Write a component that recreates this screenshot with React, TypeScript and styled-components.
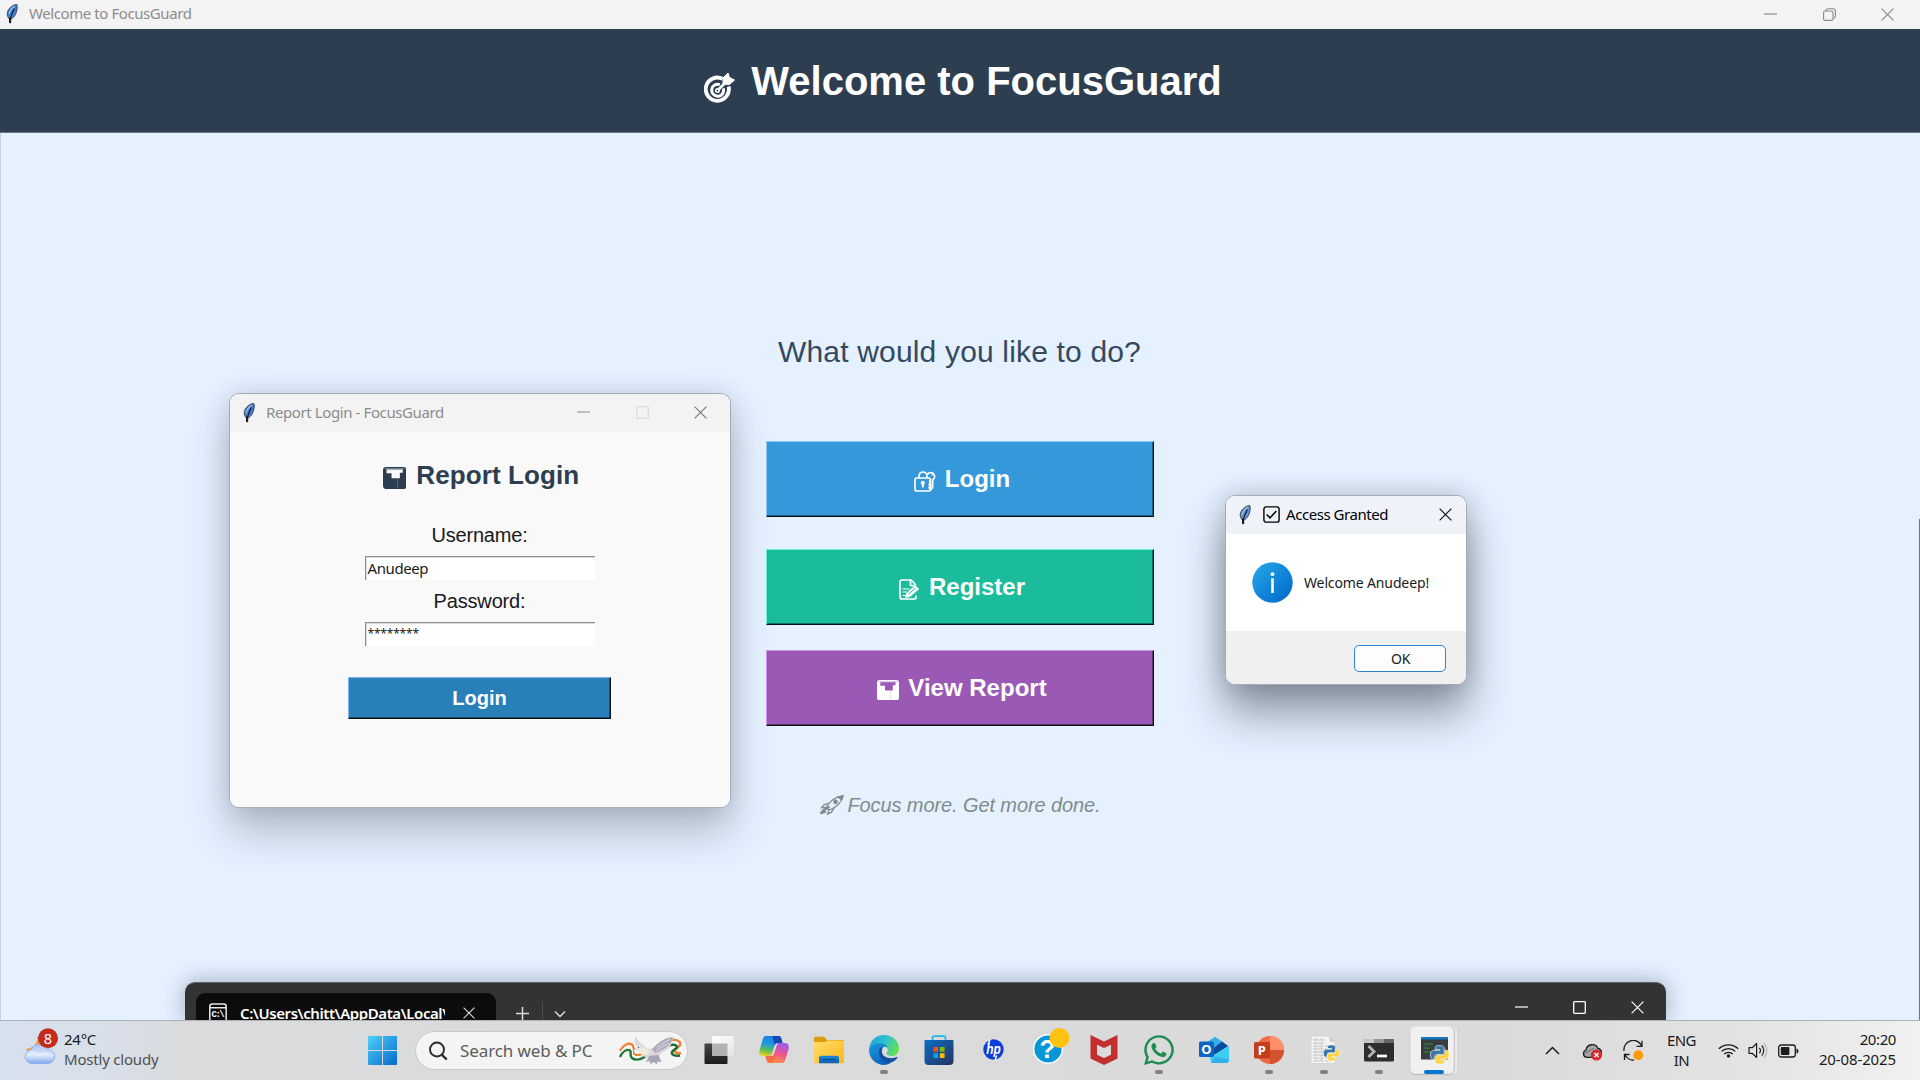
import React from "react";
import styled, { createGlobalStyle, css } from "styled-components";
import { FaWhatsapp } from "react-icons/fa";

const ARIAL = `"Liberation Sans", Arial, sans-serif`;
const SEGOE = `"Segoe UI", "Noto Sans", "Open Sans", sans-serif`;

const GlobalStyle = createGlobalStyle`
  * { box-sizing: border-box; }
  html, body { margin: 0; padding: 0; }
  body { width: 1920px; height: 1080px; overflow: hidden; background: #e5f1ff; }
  svg { display: block; flex: none; }
`;

const Desktop = styled.div`
  position: relative;
  width: 1920px;
  height: 1080px;
  overflow: hidden;
  display: flex;
  flex-direction: column;
  font-family: ${SEGOE};
`;

/* ---------- text ---------- */

type TextProps = { $size: number; $spacing?: number; $color?: string; $weight?: number };

const Text = styled.span<TextProps>`
  display: block;
  font-family: ${SEGOE};
  font-size: ${(p) => p.$size}px;
  letter-spacing: ${(p) => p.$spacing ?? 0}px;
  color: ${(p) => p.$color ?? "#1a1a1a"};
  font-weight: ${(p) => p.$weight ?? 400};
  line-height: 18px;
  padding-bottom: 2px;
  white-space: nowrap;
`;

const TkText = styled(Text)`
  font-family: ${ARIAL};
  line-height: 20px;
  padding-bottom: 0;
`;

/* ---------- main window ---------- */

const MainWindow = styled.main`
  width: 1920px;
  height: 1020px;
  display: flex;
  flex-direction: column;
  background: #e5f1ff;
`;

const MainTitleBar = styled.div`
  height: 29px;
  flex: none;
  display: flex;
  align-items: center;
  padding: 0 0 1px 6px;
  background: #f3f3f3;
`;

const MainTitle = styled.div`
  flex: 1;
  display: flex;
  align-items: center;
  gap: 11px;
`;

const Header = styled.header`
  height: 104px;
  flex: none;
  display: flex;
  align-items: center;
  justify-content: center;
  gap: 16px;
  padding-left: 6px;
  background: #2d3e50;
  border-bottom: 1px solid #68798b;
`;

const Shift = styled.div<{ $y: number }>`
  display: flex;
  margin-top: ${(p) => p.$y * 2}px;
`;

const Content = styled.section`
  flex: 1;
  display: flex;
  flex-direction: column;
  align-items: center;
  padding: 198px 2px 0 0;
  border-left: 1px solid #c5d0dd;
  background: linear-gradient(#6b7580, #6b7580) right bottom / 1px 501px no-repeat;
`;

const Question = styled(TkText)`
  line-height: 40px;
  padding-top: 1px;
  margin-bottom: 69px;
`;

const raised = css<{ $light: string; $dark: string }>`
  border: 1px solid;
  border-color: ${(p) => p.$light} #0b0f14 #0b0f14 ${(p) => p.$light};
  box-shadow: inset -1px -1px 0 ${(p) => p.$dark};
`;

const ActionButton = styled.button<{ $bg: string; $light: string; $dark: string; $gap: number }>`
  ${raised}
  width: 388px;
  height: 76px;
  flex: none;
  margin: 0 0 ${(p) => p.$gap}px;
  padding: 0 0 0 5px;
  display: flex;
  align-items: center;
  justify-content: center;
  gap: 9px;
  border-radius: 0;
  background: ${(p) => p.$bg};
`;

const Tagline = styled.div`
  display: flex;
  align-items: center;
  gap: 3px;
  height: 24px;
  padding-left: 1px;
  font-style: italic;
`;

/* ---------- floating windows ---------- */

const FloatingWindow = styled.section<{ $x: number; $y: number; $w: number; $h: number; $shadow: string }>`
  position: absolute;
  left: ${(p) => p.$x}px;
  top: ${(p) => p.$y}px;
  width: ${(p) => p.$w}px;
  height: ${(p) => p.$h}px;
  display: flex;
  flex-direction: column;
  overflow: hidden;
  border: 1px solid #a3abb5;
  border-radius: 10px;
  box-shadow: ${(p) => p.$shadow};
`;

const WindowBar = styled.div<{ $bg: string; $right: number }>`
  height: 38px;
  flex: none;
  display: flex;
  align-items: center;
  padding: 0 ${(p) => p.$right}px 1px 13px;
  background: ${(p) => p.$bg};
`;

const WindowTitle = styled.div<{ $gap: number }>`
  flex: 1;
  display: flex;
  align-items: center;
  gap: ${(p) => p.$gap}px;
`;

const Controls = styled.div<{ $gap: number; $right?: number }>`
  display: flex;
  align-items: center;
  gap: ${(p) => p.$gap}px;
  padding-right: ${(p) => p.$right ?? 0}px;
`;

const ReportBody = styled.div`
  flex: 1;
  display: flex;
  flex-direction: column;
  align-items: center;
  padding: 25px 1px 0 0;
  background: #f9f9f9;
`;

const ReportHeading = styled.div`
  height: 36px;
  display: flex;
  align-items: center;
  gap: 10px;
  padding-left: 3px;
  margin-bottom: 30px;
`;

const FieldLabel = styled(TkText)`
  line-height: 24px;
`;

const Entry = styled.div`
  width: 230px;
  height: 24px;
  margin: 9px 0 9px;
  display: flex;
  align-items: center;
  border-top: 1px solid #8f8f8f;
  border-left: 1px solid #8f8f8f;
  box-shadow: inset 1px 1px 0 #d9d9d9;
  padding-left: 2px;
  background: #fff;
`;

const SubmitButton = styled.button<{ $light: string; $dark: string }>`
  ${raised}
  width: 263px;
  height: 42px;
  margin: 22px 0 0;
  padding: 0;
  display: flex;
  align-items: center;
  justify-content: center;
  background: #2980b9;
`;

const DialogBody = styled.div`
  height: 97px;
  flex: none;
  display: flex;
  align-items: center;
  gap: 11px;
  padding: 0 0 1px 26px;
  background: #fff;
`;

const DialogFooter = styled.div`
  flex: 1;
  display: flex;
  justify-content: flex-end;
  align-items: flex-start;
  padding: 14px 20px 0 0;
  background: #f0f0f0;
`;

const OkButton = styled.button`
  width: 92px;
  height: 27px;
  display: flex;
  align-items: center;
  justify-content: center;
  padding: 2px 0 0 1px;
  border: 1.5px solid #2f86d1;
  border-radius: 5px;
  background: #fdfdfd;
`;

/* ---------- terminal ---------- */

const Terminal = styled.section`
  position: absolute;
  left: 185px;
  top: 982px;
  width: 1481px;
  height: 38px;
  display: flex;
  align-items: flex-end;
  padding-left: 11px;
  border-top: 1px solid #5c6168;
  border-radius: 10px 10px 0 0;
  background: #333;
  box-shadow: 0 0 22px rgba(40, 50, 65, 0.38);
  clip-path: inset(-40px -40px 0 -40px);
`;

const TerminalTab = styled.div`
  width: 300px;
  height: 27px;
  display: flex;
  align-items: flex-start;
  padding: 10px 20px 0 13px;
  border-radius: 9px 9px 0 0;
  background: #0c0c0c;
  overflow: hidden;
`;

const TabLabel = styled.div`
  width: 205px;
  height: 20px;
  margin: 1px 18px 0 13px;
  overflow: hidden;
  display: flex;
`;

const TabActions = styled.div`
  flex: 1;
  height: 27px;
  display: flex;
  align-items: center;
  padding: 14px 0 0 20px;
`;

const TabDivider = styled.div`
  width: 1px;
  height: 22px;
  margin: -2px 11px 0 13px;
  background: #4a4a4a;
`;

const CaptionButtons = styled(Controls)`
  align-self: flex-start;
  height: 49px;
`;

/* ---------- taskbar ---------- */

const Taskbar = styled.footer`
  height: 60px;
  flex: none;
  display: flex;
  align-items: center;
  border-top: 1px solid #aeb0b3;
  background: linear-gradient(90deg, #d7e0ee 0, #d8dfe9 110px, #dadbdc 190px, #dadada 1500px, #e3e3e3 1750px, #f1f1f1 1920px);
`;

const Weather = styled.div`
  width: 343px;
  display: flex;
  align-items: center;
  gap: 6px;
  padding: 0 0 7px 23px;
`;

const Stack = styled.div<{ $align: string; $drop?: number }>`
  display: flex;
  flex-direction: column;
  align-items: ${(p) => p.$align};
  padding-top: ${(p) => p.$drop ?? 0}px;
`;

const StartButton = styled.div`
  width: 72px;
  padding-left: 25px;
`;

const SearchBox = styled.div`
  width: 273px;
  height: 39px;
  display: flex;
  align-items: center;
  padding: 0 4px 0 13px;
  border: 1px solid #c9c9c9;
  border-radius: 20px;
  background: #f4f4f4;
`;

const SearchText = styled.div`
  flex: 1;
  padding: 2px 0 0 12px;
  display: flex;
`;

const Apps = styled.div`
  display: flex;
  height: 59px;
  margin-left: 3px;
`;

const AppSlot = styled.div`
  width: 55px;
  height: 59px;
  display: flex;
  flex-direction: column;
  align-items: center;
  padding-top: 13px;
`;

const Indicator = styled.div<{ $active?: boolean }>`
  width: ${(p) => (p.$active ? 20 : 8)}px;
  height: 4px;
  flex: none;
  margin-top: 4px;
  border-radius: 2px;
  background: ${(p) => (p.$active ? "#0078d4" : "#808080")};
`;

const ActiveTile = styled.div`
  width: 44px;
  height: 48px;
  margin: -8px 3px 0 0;
  padding: 7px 0 0 3px;
  display: flex;
  flex-direction: column;
  align-items: center;
  border: 1px solid #e4e4e4;
  border-radius: 5px;
  background: #f0f0f0;
  box-shadow: 1px 0 0 #c9c9c9, 4px 0 0 -0.5px #e9e9e9, 5px 0 0 -0.5px #cfcfcf, 0 1px 1px #bbb;
`;

const Tray = styled.div`
  flex: 1;
  height: 59px;
  display: flex;
  align-items: center;
  padding: 0 24px 0 84px;
`;

const TrayItem = styled.div<{ $ml: number; $mt?: number }>`
  display: flex;
  margin-left: ${(p) => p.$ml}px;
  margin-top: ${(p) => p.$mt ?? 0}px;
`;

const Clock = styled.div`
  flex: 1;
  display: flex;
  flex-direction: column;
  align-items: flex-end;
  padding-bottom: 2px;
`;

/* ---------- small glyphs ---------- */

const Feather = ({ tone = "#3f7fd0" }: { tone?: string }) => (
  <svg width="12" height="20" viewBox="0 0 12 20">
    <path d="M10.8.4c.8 2 .6 5.600-1 9.200-.9 2.400-2.700 4.600-4.900 5.400L4.600 19l-1-.3.100-3.500C1 12.800.6 9.600 2 6.600 3.700 3.200 7.400.600 10.800.4z" fill={tone} stroke="#3a4048" strokeWidth=".9" />
    <path d="M8.300 4.500C7 7 5 11 4.200 15.500" stroke="#0b1018" strokeWidth="1.100" fill="none" />
    <path d="M8.600 2.200C6 4 3.600 7 3.200 10" stroke="#9cc4f2" strokeWidth="1.100" fill="none" />
    <path d="M3.700 13.500l.4 5.500" stroke="#111" strokeWidth="1.600" />
  </svg>
);

const Minimize = ({ c }: { c: string }) => (
  <svg width="13" height="13" viewBox="0 0 13 13"><path d="M0 6h13" stroke={c} strokeWidth="1.200" /></svg>
);
const Maximize = ({ c }: { c: string }) => (
  <svg width="13" height="13" viewBox="0 0 13 13"><rect x=".7" y=".7" width="11.600" height="11.600" rx=".8" fill="none" stroke={c} strokeWidth="1.300" /></svg>
);
const Restore = ({ c }: { c: string }) => (
  <svg width="13" height="13" viewBox="0 0 13 13" fill="none" stroke={c} strokeWidth="1.100">
    <rect x=".6" y="3" width="9.400" height="9.400" rx="1.500" />
    <path d="M3 3V2.400Q3.200.7 5 .7h5q2.400 0 2.400 2.400v5q0 1.700-1.600 2h-.7" />
  </svg>
);
const Close = ({ c, s = 13 }: { c: string; s?: number }) => (
  <svg width={s} height={s} viewBox="0 0 13 13"><path d="M.6.6l11.800 11.800M12.400.6L.6 12.400" stroke={c} strokeWidth="1.200" /></svg>
);

const Target = () => (
  <svg width="31" height="32" viewBox="0 0 31 32" fill="none" stroke="#fff">
    <path d="M18.500 6.800A11.600 11.600 0 1 0 24.600 14.500" strokeWidth="3.800" />
    <path d="M15.800 12.600a6 6 0 1 0 3.600 3.800" strokeWidth="3" />
    <circle cx="13.500" cy="18.500" r="1.700" strokeWidth="1.600" />
    <path d="M14 18L24 8" strokeWidth="2.800" />
    <path d="M19 12V6L24 1l1.500 4.500L30.500 8 25.500 12.500z" fill="#fff" strokeWidth="1" />
  </svg>
);

const LockKey = () => (
  <svg width="22" height="21" viewBox="0 0 22 21" fill="none" stroke="#fff" strokeWidth="1.700">
    <rect x="1" y="7" width="15.500" height="13" rx="2" />
    <path d="M5 7V5a4 4 0 0 1 8 0v2" />
    <circle cx="8.800" cy="11.800" r="2.100" fill="#fff" stroke="none" />
    <path d="M8.800 12v4.500" strokeWidth="2" />
    <path d="M13.500 3.300a3.900 3.900 0 1 1 5.300 5.500l-.3 8-1.800 2-1.600-2 1.200-1.600-1.200-1.500 1-1.200-.4-3.500" />
    <path d="M17.600 3.800h.9" />
  </svg>
);

const Memo = () => (
  <svg width="21" height="21" viewBox="0 0 21 21" fill="none" stroke="#fff" strokeWidth="1.700">
    <path d="M17 16.500V18q0 2-2 2H3q-2 0-2-2V3q0-2 2-2h9l5 5" />
    <path d="M11.500 1v5.500H17" />
    <path d="M3.500 10h7M3.500 13h4.500M3.500 16.500h3" strokeWidth="1.100" />
    <path d="M7.500 14.500L16 6.500l3.800 3.500L11 17.500l-4.500 1z" fill="#fff" strokeWidth=".8" />
    <path d="M9.500 15L16 9.500" stroke="#1cba9b" strokeWidth="1" />
  </svg>
);

const ChartTile = ({ size, fg, bg }: { size: number; fg: string; bg: string }) => (
  <svg width={size} height={size * 0.94} viewBox="0 0 22 20.600">
    <rect x="0" y="0" width="22" height="20.600" rx="2.800" fill={fg} />
    <path d="M2 .8h18v1.600H2z" fill={bg} opacity=".35" />
    <path d="M3.300 2.300h15.200v3h-2.700v5.200H8V5.800H3.300z" fill={bg} />
    <path d="M13.600 11v8" stroke={bg} strokeOpacity=".25" strokeWidth=".8" />
  </svg>
);

const Rocket = () => (
  <svg width="25" height="20" viewBox="0 0 25 20" fill="none" stroke="#7f8c8d" strokeWidth="1.300">
    <path d="M7.500 12.500C10 6.500 16 1.500 24 1c-1 6-6.500 11.500-13.500 14z" />
    <path d="M19 1.800l3.500 3L24 1z" fill="#7f8c8d" />
    <circle cx="16.500" cy="6.800" r="1.700" fill="#7f8c8d" />
    <path d="M9.500 8.300L5 9.800l-2.500 3 5-.5M15 13.200l-2.500 4-4 2 1.500-4" />
    <path d="M10.500 11.500L6 15" strokeWidth="2.200" />
    <path d="M6.500 13l-5 5.500L7 16.500M6 14.500l-2 .5" strokeWidth="2" />
  </svg>
);

const CheckGlyph = () => (
  <svg width="17" height="17" viewBox="0 0 17 17" fill="none" stroke="#000">
    <rect x=".9" y=".9" width="15.200" height="15.200" rx="2.200" strokeWidth="1.400" />
    <path d="M3.600 8.500l3.400 3.400L13.300 5" strokeWidth="1.500" />
  </svg>
);

const InfoIcon = () => (
  <svg width="41" height="41" viewBox="0 0 41 41">
    <defs>
      <linearGradient id="info" x1="0" y1="0" x2="1" y2="1">
        <stop offset="0" stopColor="#25a8ea" />
        <stop offset="1" stopColor="#0067c8" />
      </linearGradient>
    </defs>
    <circle cx="20.500" cy="20.500" r="20.200" fill="url(#info)" />
    <circle cx="20.500" cy="12.200" r="1.900" fill="#fff" />
    <path d="M20.500 16.300V31" stroke="#fff" strokeWidth="2.600" />
  </svg>
);

const ConsoleGlyph = () => (
  <svg width="18" height="18" viewBox="0 0 18 18">
    <rect x=".8" y="1" width="16.400" height="20" rx="2.500" fill="none" stroke="#e8e8e8" strokeWidth="1.500" />
    <path d="M1 4.800h16" stroke="#e8e8e8" strokeWidth="1.500" />
    <text x="2.600" y="14.200" fontFamily="Liberation Mono" fontSize="9" fontWeight="700" fill="#fff" textLength="13">C:\</text>
  </svg>
);

/* ---------- taskbar icons ---------- */

const WeatherIcon = () => (
  <svg width="35" height="38" viewBox="0 0 35 38">
    <defs>
      <linearGradient id="cloud" x1="0" y1="0" x2="0" y2="1">
        <stop offset="0" stopColor="#a9c4f5" /><stop offset=".6" stopColor="#dbe7fd" /><stop offset="1" stopColor="#7da6ee" />
      </linearGradient>
      <linearGradient id="moon" x1="0" y1="0" x2="0" y2="1">
        <stop offset="0" stopColor="#f5b63a" /><stop offset="1" stopColor="#f08a1d" />
      </linearGradient>
    </defs>
    <path d="M14 8c1.500 6-3 12.500-11 12.800C5 26 15 27 20 23L24 10z" fill="url(#moon)" />
    <path d="M9 35.500a7 7 0 0 1-1-13.900A8.800 8.800 0 0 1 24 21a7.300 7.300 0 0 1 1.500 14.500z" fill="url(#cloud)" stroke="#84a8ea" strokeWidth=".8" />
    <path d="M5 27c3-3 8-3 11 0 3-2 8-2 11 0" stroke="#f0f5ff" strokeWidth="2" fill="none" opacity=".7" />
    <circle cx="25" cy="10.300" r="10" fill="#c42b1c" />
    <text x="25" y="15.500" textAnchor="middle" fontFamily="Noto Sans" fontSize="14.500" fill="#fff">8</text>
  </svg>
);

const StartIcon = () => (
  <svg width="29" height="29" viewBox="0 0 29 29">
    <defs>
      <linearGradient id="win" x1="0" y1="0" x2="29" y2="29" gradientUnits="userSpaceOnUse">
        <stop offset="0" stopColor="#4fd0fb" /><stop offset="1" stopColor="#0669cc" />
      </linearGradient>
    </defs>
    <path d="M1 0h13v14H0V1q0-1 1-1zM15 0h13q1 0 1 1v13H15zM0 15h14v14H1q-1 0-1-1zM15 15h14v13q0 1-1 1H15z" fill="url(#win)" />
  </svg>
);

const SearchIcon = () => (
  <svg width="19" height="20" viewBox="0 0 19 20" fill="none" stroke="#2b2b2b">
    <circle cx="8" cy="8.500" r="7" strokeWidth="1.900" /><path d="M13 13.800l4.800 4.700" strokeWidth="2.400" />
  </svg>
);

const Dove = () => (
  <svg width="64" height="32" viewBox="0 0 64 32">
    <g fill="none" strokeWidth="2.400">
      <path d="M1 16C4 10 9 7.500 13 9.500c3 2-1 6 2 9.500 3 2.500 7 1 11-1" stroke="#f08236" />
      <path d="M2 18.500C5 13 9 11 12 12.500c2 2-1 6 2 8.500s8 1.500 12-1" stroke="#fbfbfb" />
      <path d="M1 22c3-6 7-8 10-6.500 2 1.500-1 5 2 7.500s8 2 14-2" stroke="#1d7a35" />
      <path d="M50 6c4-2 9-1.500 11 1.500s-3 5-5 7 2 4.500 6 3.500" stroke="#f08236" />
      <path d="M49 11c4-2 8-1.500 9 .5s-4 3-5 5.500 3 4.500 8 3.500" stroke="#1d6b30" />
    </g>
    <path d="M17 1c1 4 4 7 8 10 3 3 6 3.500 9 2 6-6 12-10.500 20-11 0 8-5 13-12 16.500-2 3-5 5-9 5-7 0-10-3-13-8l-4-1 3-2C15 8 15 4 17 1z" fill="#dbd7dc" />
    <path d="M33 14c6-6 12-11.500 21-12-1 7-8 13-18 16z" fill="#b0acbd" />
    <path d="M38 12.500L51 4M37 15.500L50 8" stroke="#dcd8e4" strokeWidth="1" />
    <path d="M18 12c5-1 10 1 13 5-2 4-9 4-12-1z" fill="#efe9dd" />
    <path d="M30 21l-3 6 4-1 0 3.500 3.500-2.500 3.500 2.500.5-3 4 .5-3-7z" fill="#a9a4b2" />
    <path d="M16 12.500l-2.500 1 3 1.200z" fill="#c88d54" /><circle cx="19.500" cy="12.600" r=".7" fill="#333" />
  </svg>
);

const Icon = ({ children }: { children: React.ReactNode }) => (
  <svg width="32" height="32" viewBox="0 0 32 32">{children}</svg>
);

const TaskView = () => (
  <Icon>
    <defs>
      <linearGradient id="tv" x1="0" y1="0" x2="0" y2="1"><stop offset="0" stopColor="#454545" /><stop offset="1" stopColor="#1c1c1c" /></linearGradient>
      <linearGradient id="tw" x1="0" y1="0" x2="1" y2="1"><stop offset="0" stopColor="#fff" /><stop offset="1" stopColor="#e3e3e3" /></linearGradient>
    </defs>
    <rect x="1.500" y="9.500" width="23" height="20.500" rx="1" fill="url(#tv)" />
    <rect x="9" y="2" width="22" height="20" rx="1" fill="url(#tw)" />
    <rect x="9" y="9.500" width="15.500" height="12.500" fill="#b2b2b2" />
  </Icon>
);

const Copilot = () => (
  <Icon>
    <defs>
      <linearGradient id="cpa" x1=".5" y1="0" x2=".3" y2="1"><stop offset="0" stopColor="#1f7fe8" /><stop offset=".4" stopColor="#1a9be0" /><stop offset=".7" stopColor="#57b95c" /><stop offset="1" stopColor="#e8d01c" /></linearGradient>
      <linearGradient id="cpb" x1=".6" y1="0" x2=".3" y2="1"><stop offset="0" stopColor="#a05be8" /><stop offset=".5" stopColor="#f0538c" /><stop offset="1" stopColor="#ff9a3c" /></linearGradient>
    </defs>
    <path d="M8 2h12.500c2 0 2.600 1.500 3.200 4L24.500 9H20c-2 0-3 1-3.800 3.500L14 19c-.8 2-1.500 3-4 3H5c-3.500 0-4.300-3-3.300-6.500L4.500 6C5.300 3.500 6 2 8 2z" fill="url(#cpa)" />
    <path d="M14.500 2h6c2 0 2.600 1.500 3.200 4L24.500 9H20c-2 0-3 .8-3.500 2z" fill="#1746b8" />
    <path d="M24 29H12c-2 0-3-1-3.600-3.500L7.500 22H11c2.500 0 3.300-1.500 4-3.500l2.500-7C18.300 9.500 19.300 9 21 9h6c3.500 0 4.500 3 3.500 6.500L27.500 25c-.8 2.600-1.500 4-3.500 4z" fill="url(#cpb)" />
    <path d="M12 29c-2 0-3-1-3.600-3.500L7.500 22H11c2.500 0 3.300-1.500 4-3.500L16 16l1 8c-.5 3-2 5-5 5z" fill="#f0643c" opacity=".75" />
    <path d="M17.500 11.500c.6-1.600 1.500-2.300 3-2.500-1.200 1-1.700 2-2.300 4L16 19.500c-.7 2-1.500 2.500-4.500 2.500 2 0 3-1.500 3.500-3.500z" fill="#efe9f2" />
  </Icon>
);

const Explorer = () => (
  <Icon>
    <defs>
      <linearGradient id="fo" x1="0" y1="0" x2="1" y2="1"><stop offset="0" stopColor="#ffdd6e" /><stop offset="1" stopColor="#fdb913" /></linearGradient>
      <linearGradient id="fb" x1="0" y1="0" x2="0" y2="1"><stop offset="0" stopColor="#1e88dc" /><stop offset="1" stopColor="#0b62b8" /></linearGradient>
    </defs>
    <path d="M1 4q0-1.200 1.200-1.200h9L14 6h17v8H1z" fill="#dd9b10" />
    <path d="M1 8h11l2.500-1.500H31V28q0 1.200-1.200 1.200H2.200Q1 29.200 1 28z" fill="url(#fo)" />
    <path d="M6 29.200V24q0-2.300 2.300-2.300h15.400Q26 21.700 26 24v5.200z" fill="url(#fb)" />
    <path d="M9.500 25.500h13" stroke="#0a4b90" strokeWidth="1.200" />
  </Icon>
);

const Edge = () => (
  <Icon>
    <defs>
      <linearGradient id="ea" x1="0" y1=".2" x2="1" y2=".6"><stop offset="0" stopColor="#1f9fd8" /><stop offset=".5" stopColor="#2fc3d0" /><stop offset="1" stopColor="#64e04c" /></linearGradient>
      <linearGradient id="eb" x1="0" y1="0" x2=".6" y2="1"><stop offset="0" stopColor="#1b9be0" /><stop offset="1" stopColor="#0c62b8" /></linearGradient>
    </defs>
    <path d="M1.300 13C3 5.500 9 1 16 1c8.500 0 15 6 15 13.500 0 5-3.500 7.500-7.500 7.500-3 0-5-1.200-5-2.500 0-1 1.200-1.500 1.200-3.500 0-3-3-5.600-7.500-5.600C6.500 10.400 3 13 1.300 17z" fill="url(#ea)" />
    <path d="M1 16C2.500 11.500 7 8.500 12.500 9c3.500.3 6 2 7 4.500-2.500-1.700-6.500-.5-6.500 4.500 0 6 5 10 10.500 10C21 30.200 18.500 31 16 31 8 31 1 24.500 1 16z" fill="url(#eb)" />
    <path d="M12 14c-3 7 1.500 14 9 14.500 3.500 0 6.500-1.800 8.500-4.700.4-.7-.2-1-.8-.7-5 2.300-14.500 1.200-14.800-5.600 0-1.500.3-3 1.300-4.300-1.200 0-2.500.2-3.200.8z" fill="#1151a0" />
  </Icon>
);

const Store = () => (
  <Icon>
    <defs>
      <linearGradient id="st" x1="0" y1="0" x2="1" y2="1"><stop offset="0" stopColor="#0c6cc4" /><stop offset="1" stopColor="#23345f" /></linearGradient>
    </defs>
    <path d="M9.500 8V4q0-1.800 1.800-1.800h9.400q1.800 0 1.800 1.800v4" fill="none" stroke="#1fb6f2" strokeWidth="1.700" />
    <path d="M1.500 7q0-1 1-1h27q1 0 1 1v20q0 4-4 4h-21q-4 0-4-4z" fill="url(#st)" />
    <path d="M10.500 13H15v4.800h-4.500z" fill="#f25022" /><path d="M16.800 13h4.800v4.800h-4.800z" fill="#7fba00" />
    <path d="M10.500 19.200H15V24h-4.500z" fill="#00a4ef" /><path d="M16.800 19.200h4.800V24h-4.800z" fill="#ffb900" />
  </Icon>
);

const Hp = () => (
  <Icon>
    <circle cx="15.500" cy="15.500" r="10.200" fill="#0b3fd8" />
    <text x="15.400" y="20" textAnchor="middle" fontFamily="Liberation Sans" fontStyle="italic" fontWeight="700" fontSize="15" fill="#fff" textLength="14.500" lengthAdjust="spacingAndGlyphs">hp</text>
    <path d="M10 10.500l2-5M17 26.500l1.700-5" stroke="#fff" strokeWidth="1.500" />
  </Icon>
);

const HelpIcon = styled.svg`
  margin: -7px 0 0 7px;
`;

const Help = () => (
  <HelpIcon width="40" height="38" viewBox="0 0 40 38">
    <circle cx="16" cy="22" r="15" fill="#fff" /><circle cx="16" cy="22" r="13.600" fill="#0496d7" />
    <text x="15.500" y="31" textAnchor="middle" fontFamily="Liberation Sans" fontWeight="700" fontSize="26" fill="#fff">?</text>
    <circle cx="27.500" cy="11" r="10" fill="#ffc20e" />
  </HelpIcon>
);

const Mcafee = () => (
  <Icon>
    <path d="M2.500 1L16 7.500 29.500 1v23.500L16 31 2.500 24.500zM9 10.800v10L16 24l7-3.200v-10L16 14z" fill="#c22f2f" fillRule="evenodd" />
  </Icon>
);

const Outlook = () => (
  <Icon>
    <path d="M5 11L17 3l13 9-12 9z" fill="#2f9ce0" />
    <path d="M17 3l7 4.500-15 10L5 11z" fill="#35b1ea" />
    <path d="M24 7.500l6 4.500-14 9-5-3z" fill="#0c4a9e" />
    <path d="M31 12v13.500q0 3.500-3.500 3.500H13l-1-6z" fill="#3fcdf4" />
    <path d="M31 25.500q0 3.500-3.500 3.500H13l4-6z" fill="#2fb0ea" />
    <rect x="1" y="7.500" width="15" height="15.500" rx="1.500" fill="#0b65c4" />
    <text x="8.500" y="20" textAnchor="middle" fontFamily="Noto Sans" fontWeight="700" fontSize="13" fill="#fff">O</text>
  </Icon>
);

const PowerPoint = () => (
  <Icon>
    <circle cx="17" cy="16" r="14" fill="#ed6c47" />
    <path d="M17 2a14 14 0 0 1 14 14H17z" fill="#ff8f6b" /><path d="M31 16a14 14 0 0 1-14 14V16z" fill="#d35230" />
    <rect x="1" y="8" width="16" height="16.500" rx="1.500" fill="#c43e1c" />
    <text x="8.700" y="21" textAnchor="middle" fontFamily="Noto Sans" fontWeight="700" fontSize="13" fill="#fff">P</text>
  </Icon>
);

const PythonMark = ({ x, y, s }: { x: number; y: number; s: number }) => (
  <g transform={`translate(${x} ${y}) scale(${s / 24})`} stroke="#f3f3f3" strokeWidth=".9">
    <path fill="#3b76a8" d="M14.250.18l.9.2.73.26.59.3.45.32.34.34.25.34.16.33.1.3.04.26.02.2-.01.13V8.500l-.05.63-.13.55-.21.46-.26.38-.3.31-.33.25-.35.19-.35.14-.33.1-.3.07-.26.04-.21.02H8.770l-.69.05-.59.14-.5.22-.41.27-.33.32-.27.35-.2.36-.15.37-.1.35-.07.32-.04.27-.02.21v3.060H3.170l-.21-.03-.28-.07-.32-.12-.35-.18-.36-.26-.36-.36-.35-.46-.32-.59-.28-.73-.21-.88-.14-1.050-.05-1.230.06-1.220.16-1.040.24-.87.32-.71.36-.57.4-.44.42-.33.42-.24.4-.16.36-.1.32-.05.24-.01h.16l.06.01h8.160v-.83H6.180l-.01-2.750-.02-.37.05-.34.11-.31.17-.28.25-.26.31-.23.38-.2.44-.18.51-.15.58-.12.64-.1.71-.06.77-.04.84-.02 1.270.05z" />
    <path fill="#ffd344" d="M21.100 6.110l.28.06.32.12.35.18.36.27.36.35.35.47.32.59.28.73.21.88.14 1.040.05 1.230-.06 1.230-.16 1.040-.24.86-.32.71-.36.57-.4.45-.42.33-.42.24-.4.16-.36.09-.32.05-.24.02-.16-.01h-8.220v.82h5.840l.01 2.760.02.36-.05.34-.11.31-.17.29-.25.25-.31.24-.38.2-.44.17-.51.15-.58.13-.64.09-.71.07-.77.04-.84.01-1.270-.04-1.070-.14-.9-.2-.73-.25-.59-.3-.45-.33-.34-.34-.25-.34-.16-.33-.1-.3-.04-.25-.02-.2.01-.13v-5.340l.05-.64.13-.54.21-.46.26-.38.3-.32.33-.24.35-.2.35-.14.33-.1.3-.06.26-.04.21-.02.13-.01h5.840l.69-.05.59-.14.5-.21.41-.28.33-.32.27-.35.2-.36.15-.36.1-.35.07-.32.04-.28.02-.21V6.070h2.090l.14.01z" />
  </g>
);

const PythonFile = () => (
  <Icon>
    <path d="M3 2h18.500l5.500 6v21.500H3z" fill="#f4f4f4" stroke="#d3d3d3" strokeWidth=".8" />
    <path d="M5 6h13M5 9h12M5 12h15M5 15h14M5 18h15M5 21h12M5 24h15M5 27h17M8 4v24M13 4v24" stroke="#b9b9b9" strokeWidth=".9" strokeDasharray="3 1" />
    <path d="M21.500 2l5.500 6h-5.500z" fill="#cfcfcf" />
    <PythonMark x={15.500} y={11} s={16} />
  </Icon>
);

const TerminalIcon = () => (
  <Icon>
    <rect x="1" y="5" width="30" height="22.500" rx="1.500" fill="#2d2d2d" />
    <path d="M2.500 5h8.500v4H1V6.500Q1 5 2.500 5z" fill="#c9c9c9" /><path d="M11 5h10v4H11z" fill="#949494" /><path d="M21 5h8.500Q31 5 31 6.500V9H21z" fill="#666" />
    <path d="M5.500 12l5.500 5.500L5.500 23" fill="none" stroke="#b5b5b5" strokeWidth="2.900" /><path d="M14 22h10" stroke="#fff" strokeWidth="2.700" />
  </Icon>
);

const PythonConsole = () => (
  <Icon>
    <rect x="3" y="3" width="27" height="22.500" fill="#3a3d40" /><rect x="3" y="3" width="27" height="2.500" fill="#1379c4" />
    <path d="M6 10h9M6 14h6M6 18h7" stroke="#2f8a3a" strokeWidth="1.200" />
    <PythonMark x={12.500} y={11.500} s={18.500} />
  </Icon>
);

const CloudError = () => (
  <svg width="21" height="18" viewBox="0 0 21 18">
    <path d="M5 14.300H4.500A3.800 3.800 0 0 1 4 7 6.300 6.300 0 0 1 16 5.500c2.500.5 3.500 2 3.500 4.500L10 14.300z" fill="#a6a6a6" stroke="#1c1c1c" strokeWidth="1.300" />
    <path d="M2.500 10.500l9-5" stroke="#6c6c6c" strokeWidth="1" />
    <circle cx="14.500" cy="12" r="5.600" fill="#d92b2f" /><path d="M12.500 10l4 4M16.500 10l-4 4" stroke="#fff" strokeWidth="1.400" />
  </svg>
);

const SyncIcon = () => (
  <svg width="21" height="21" viewBox="0 0 21 21" fill="none" stroke="#1c1c1c" strokeWidth="1.300">
    <path d="M1 11A9.300 9.300 0 0 1 18.500 5.500M19 .8v5.500h-5.500M1.500 20v-5.500h5M2 15c2 3.500 6 5.300 9 5" />
    <circle cx="15.300" cy="15.300" r="5" fill="#ff9c0a" stroke="none" />
  </svg>
);

const Wifi = () => (
  <svg width="21" height="15" viewBox="0 0 21 15" fill="none" stroke="#1c1c1c" strokeWidth="1.300">
    <path d="M.8 5.800a13.800 13.800 0 0 1 19.400 0M3.600 8.400a10 10 0 0 1 13.800 0M6.300 11a6 6 0 0 1 8.400 0" />
    <circle cx="10.500" cy="13" r="1.700" fill="#1c1c1c" stroke="none" />
  </svg>
);

const Volume = () => (
  <svg width="20" height="17" viewBox="0 0 20 17" fill="none" stroke="#1c1c1c" strokeWidth="1.200">
    <path d="M1 5.700h3.200L8.600 1.500v14L4.200 11.300H1z" strokeLinejoin="round" />
    <path d="M11.300 5.800a4 4 0 0 1 0 5.400M13.700 3.500a7 7 0 0 1 0 10" /><path d="M16 1.500a10 10 0 0 1 0 14" stroke="#b5b5b5" />
  </svg>
);

const Battery = () => (
  <svg width="21" height="14" viewBox="0 0 21 14">
    <rect x=".7" y="1" width="16.600" height="12" rx="2.500" fill="none" stroke="#1c1c1c" strokeWidth="1.300" />
    <rect x="2.800" y="3" width="8.600" height="8" rx="1" fill="#1c1c1c" /><path d="M18.500 4.500q2 0 2 2.500t-2 2.500z" fill="#1c1c1c" />
  </svg>
);

const WhatsAppIcon = styled(FaWhatsapp)`
  margin: -1px;
  color: #1f8c54;
`;

const APPS: { icon: React.ReactNode; running?: boolean }[] = [
  { icon: <TaskView /> },
  { icon: <Copilot /> },
  { icon: <Explorer /> },
  { icon: <Edge />, running: true },
  { icon: <Store /> },
  { icon: <Hp /> },
  { icon: <Help /> },
  { icon: <Mcafee /> },
  { icon: <WhatsAppIcon size={34} />, running: true },
  { icon: <Outlook /> },
  { icon: <PowerPoint />, running: true },
  { icon: <PythonFile />, running: true },
  { icon: <TerminalIcon />, running: true },
];

const ACTIONS = [
  { label: "Login", icon: <LockKey />, bg: "#3498db", light: "#8fc9fb", dark: "#1f5c86", gap: 32 },
  { label: "Register", icon: <Memo />, bg: "#1bbc9b", light: "#6df5d3", dark: "#0f705d", gap: 25 },
  { label: "View Report", icon: <ChartTile size={22} fg="#fff" bg="#9b59b6" />, bg: "#9b59b6", light: "#cf94f0", dark: "#5d356d", gap: 67 },
];

export default function App() {
  return (
    <Desktop>
      <GlobalStyle />
      <MainWindow>
        <MainTitleBar>
          <MainTitle>
            <Feather />
            <Text $size={15} $spacing={-0.42} $color="#8c8c8c">Welcome to FocusGuard</Text>
          </MainTitle>
          <Controls $gap={45.5} $right={26}>
            <Minimize c="#8a8a8a" /><Restore c="#8a8a8a" /><Close c="#8a8a8a" />
          </Controls>
        </MainTitleBar>
        <Header>
          <Shift $y={7}><Target /></Shift>
          <TkText $size={40} $color="#fff" $weight={700}>Welcome to FocusGuard</TkText>
        </Header>
        <Content>
          <Question $size={30} $spacing={0.17} $color="#34495e">What would you like to do?</Question>
          {ACTIONS.map((a) => (
            <ActionButton key={a.label} $bg={a.bg} $light={a.light} $dark={a.dark} $gap={a.gap}>
              <Shift $y={2}>{a.icon}</Shift>
              <TkText $size={24} $color="#fff" $weight={700}>{a.label}</TkText>
            </ActionButton>
          ))}
          <Tagline>
            <Rocket />
            <TkText $size={20} $spacing={-0.1} $color="#7f8c8d">Focus more. Get more done.</TkText>
          </Tagline>
        </Content>
      </MainWindow>

      <FloatingWindow $x={229} $y={393} $w={502} $h={415} $shadow="0 24px 40px rgba(45,55,70,.28), 0 0 24px rgba(45,55,70,.15)">
        <WindowBar $bg="#f3f3f3" $right={23}>
          <WindowTitle $gap={11}>
            <Feather />
            <Text $size={15} $spacing={-0.4} $color="#8c8c8c">Report Login - FocusGuard</Text>
          </WindowTitle>
          <Controls $gap={45.5}>
            <Minimize c="#8a8a8a" /><Maximize c="#dcdcdc" /><Close c="#7a7a7a" />
          </Controls>
        </WindowBar>
        <ReportBody>
          <ReportHeading>
            <Shift $y={3}><ChartTile size={23.500} fg="#2c3e50" bg="#f9f9f9" /></Shift>
            <TkText $size={26} $spacing={0.1} $color="#2c3e50" $weight={700}>Report Login</TkText>
          </ReportHeading>
          <FieldLabel $size={20} $spacing={-0.2}>Username:</FieldLabel>
          <Entry><Text $size={15} $spacing={-0.4}>Anudeep</Text></Entry>
          <FieldLabel $size={20} $spacing={-0.15}>Password:</FieldLabel>
          <Entry><Text $size={12} $spacing={-0.2}>********</Text></Entry>
          <SubmitButton $light="#7fb2ee" $dark="#184c6f">
            <TkText $size={20} $color="#fff" $weight={700}>Login</TkText>
          </SubmitButton>
        </ReportBody>
      </FloatingWindow>

      <FloatingWindow $x={1225} $y={495} $w={242} $h={190} $shadow="0 28px 44px rgba(30,38,50,.45), 0 0 26px rgba(30,38,50,.22)">
        <WindowBar $bg="#eff3f9" $right={14}>
          <WindowTitle $gap={12}>
            <Feather tone="#5f93cf" />
            <WindowTitle $gap={6}>
              <CheckGlyph />
              <Text $size={15} $spacing={-0.45} $color="#000">Access Granted</Text>
            </WindowTitle>
          </WindowTitle>
          <Close c="#111" />
        </WindowBar>
        <DialogBody>
          <InfoIcon />
          <Shift $y={2}><Text $size={14} $spacing={-0.13}>Welcome Anudeep!</Text></Shift>
        </DialogBody>
        <DialogFooter>
          <OkButton><Text $size={14} $spacing={-0.3}>OK</Text></OkButton>
        </DialogFooter>
      </FloatingWindow>

      <Terminal>
        <TerminalTab>
          <ConsoleGlyph />
          <TabLabel><Text $size={15} $spacing={-0.42} $color="#fff" $weight={600}>C:\Users\chitt\AppData\Local\</Text></TabLabel>
          <Controls $gap={0}><Shift $y={2}><Close c="#ddd" s={12} /></Shift></Controls>
        </TerminalTab>
        <TabActions>
          <svg width="13" height="13" viewBox="0 0 13 13"><path d="M0 6.500h13M6.500 0v13" stroke="#dcdcdc" strokeWidth="1.500" /></svg>
          <TabDivider />
          <svg width="12" height="8" viewBox="0 0 12 8"><path d="M1 1.500l5 5 5-5" fill="none" stroke="#dcdcdc" strokeWidth="1.500" /></svg>
        </TabActions>
        <CaptionButtons $gap={45} $right={22}>
          <Minimize c="#fff" /><Maximize c="#fff" /><Close c="#fff" />
        </CaptionButtons>
      </Terminal>

      <Taskbar>
        <Weather>
          <WeatherIcon />
          <Stack $align="flex-start" $drop={6}>
            <Text $size={15} $spacing={-0.25}>24°C</Text>
            <Text $size={15} $spacing={-0.2} $color="#505050">Mostly cloudy</Text>
          </Stack>
        </Weather>
        <StartButton><StartIcon /></StartButton>
        <SearchBox>
          <SearchIcon />
          <SearchText><Text $size={17} $spacing={-0.1} $color="#5c5c5c">Search web &amp; PC</Text></SearchText>
          <Dove />
        </SearchBox>
        <Apps>
          {APPS.map((app, i) => (
            <AppSlot key={i}>
              {app.icon}
              {app.running && <Indicator />}
            </AppSlot>
          ))}
          <AppSlot>
            <ActiveTile>
              <PythonConsole />
              <Indicator $active />
            </ActiveTile>
          </AppSlot>
        </Apps>
        <Tray>
          <svg width="15" height="9" viewBox="0 0 15 9"><path d="M1 8l6.500-6.500L14 8" fill="none" stroke="#1c1c1c" strokeWidth="1.500" /></svg>
          <TrayItem $ml={22} $mt={3}><CloudError /></TrayItem>
          <TrayItem $ml={20}><SyncIcon /></TrayItem>
          <TrayItem $ml={23}>
            <Stack $align="center">
              <Text $size={15} $spacing={-0.6}>ENG</Text>
              <Text $size={15} $spacing={-0.6}>IN</Text>
            </Stack>
          </TrayItem>
          <TrayItem $ml={22}><Wifi /></TrayItem>
          <TrayItem $ml={9}><Volume /></TrayItem>
          <TrayItem $ml={10}><Battery /></TrayItem>
          <Clock>
            <Text $size={15} $spacing={-0.4}>20:20</Text>
            <Text $size={15} $spacing={-0.12}>20-08-2025</Text>
          </Clock>
        </Tray>
      </Taskbar>
    </Desktop>
  );
}
